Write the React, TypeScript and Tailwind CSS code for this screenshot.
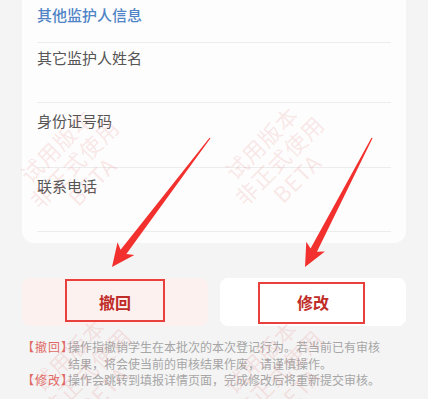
import React from 'react';

const fields = [
  { label: '其它监护人姓名', h: 'h-[60px]', pt: 'pt-[5px]' },
  { label: '身份证号码', h: 'h-[65px]', pt: 'pt-[8px]' },
  { label: '联系电话', h: 'h-[64px]', pt: 'pt-[8px]' },
];

const marks = [
  'left-[70px] top-[-45px]',
  'left-[275px] top-[-45px]',
  'left-[74px] top-[163px]',
  'left-[279px] top-[160px]',
  'left-[86px] top-[372px]',
  'left-[278px] top-[374px]',
];

function Watermark({ pos }: { pos: string }) {
  return (
    <div
      className={`absolute ${pos} -translate-x-1/2 -translate-y-1/2 -rotate-45 text-center text-[22px] leading-[25px] font-normal tracking-[1px] text-[#e45a5a]/15 whitespace-nowrap pointer-events-none`}
    >
      <div>试用版本</div>
      <div>非正式使用</div>
      <div>BETA</div>
    </div>
  );
}

function Arrow({ tail, tip }: { tail: [number, number]; tip: [number, number] }) {
  const dx = tip[0] - tail[0];
  const dy = tip[1] - tail[1];
  const len = Math.sqrt(dx * dx + dy * dy);
  const ang = (Math.atan2(dy, dx) * 180) / Math.PI;
  const pts = `0,-0.6 ${len - 19},-3.6 ${len - 23},-10.5 ${len},0 ${len - 23},10.5 ${len - 19},3.6 0,0.6`;
  return <polygon points={pts} fill="#f2302e" transform={`translate(${tail[0]} ${tail[1]}) rotate(${ang})`} />;
}

export default function App() {
  return (
    <div
      className="relative w-full h-[399px] overflow-hidden bg-[#f4f4f4] px-[22px]"
      style={{ fontFamily: '"Noto Sans CJK SC", "Noto Sans", sans-serif' }}
    >
      {/* card */}
      <div className="bg-[#fdfdfd] rounded-b-xl px-[15px] pb-[11px]">
        <div className="h-[43px] pt-[5px] border-b border-[#ececec] text-[15px] leading-[20px] font-medium text-[#4f84c6]">
          其他监护人信息
        </div>
        {fields.map((f) => (
          <div key={f.label} className={`${f.h} ${f.pt} border-b border-[#ececec] text-[15px] leading-[20px] text-[#555555]`}>
            {f.label}
          </div>
        ))}
      </div>

      {/* buttons */}
      <div className="mt-[35px] flex gap-[12px]">
        <div className="relative flex-1 h-[48px] rounded-lg bg-[#fdf1f0] flex items-center justify-center text-[16px] font-bold text-[#bf2d29]">
          撤回
          <div className="absolute left-[43px] top-[1px] w-[100px] h-[43px] border-2 border-[#e8403d]" />
        </div>
        <div className="relative flex-1 h-[48px] rounded-lg bg-white flex items-center justify-center text-[16px] font-bold text-[#bf2d29]">
          修改
          <div className="absolute left-[38px] top-[4px] w-[107px] h-[42px] border-2 border-[#e8403d]" />
        </div>
      </div>

      {/* notes */}
      <div className="mt-[13px] text-[12px] leading-[16.5px]">
        <div className="flex">
          <span className="w-[46px] shrink-0 whitespace-nowrap tracking-[1px] text-[#e06a66]">【撤回】</span>
          <span className="w-[318px] text-[#a6a6a6]">操作指撤销学生在本批次的本次登记行为。若当前已有审核结果，将会使当前的审核结果作废，请谨慎操作。</span>
        </div>
        <div className="flex">
          <span className="w-[46px] shrink-0 whitespace-nowrap tracking-[1px] text-[#e06a66]">【修改】</span>
          <span className="text-[#a6a6a6]">操作会跳转到填报详情页面，完成修改后将重新提交审核。</span>
        </div>
      </div>

      {marks.map((m) => (
        <Watermark key={m} pos={m} />
      ))}

      <svg className="absolute inset-0 pointer-events-none" width="428" height="399" viewBox="0 0 428 399">
        <Arrow tail={[210, 138]} tip={[112, 267]} />
        <Arrow tail={[372, 138]} tip={[305, 267]} />
      </svg>
    </div>
  );
}
